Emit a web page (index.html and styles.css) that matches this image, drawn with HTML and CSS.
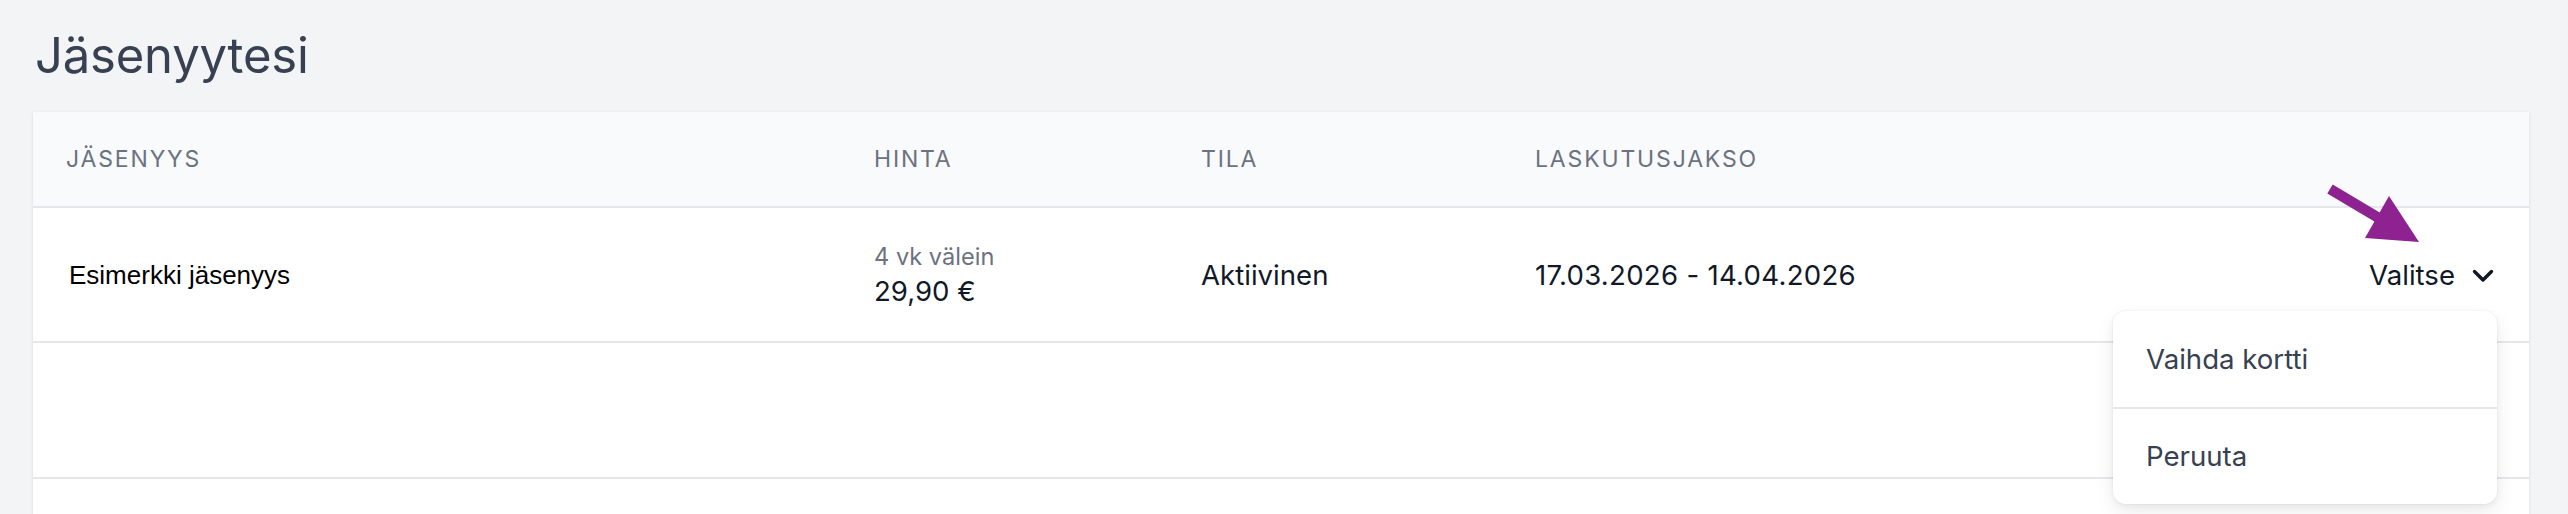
FILE: index.html
```html
<!DOCTYPE html>
<html lang="fi">
<head>
<meta charset="utf-8">
<title>Jäsenyytesi</title>
<link rel="stylesheet" href="styles.css">
</head>
<body>
<div class="page">
  <h1 class="title">Jäsenyytesi</h1>
  <div class="card">
    <div class="row head">
      <div class="th">Jäsenyys</div>
      <div class="th">Hinta</div>
      <div class="th">Tila</div>
      <div class="th">Laskutusjakso</div>
      <div class="th"></div>
    </div>
    <div class="row item">
      <div class="cell name">Esimerkki jäsenyys</div>
      <div class="cell price">
        <span class="interval">4 vk välein</span>
        <span class="amount">29,90 €</span>
      </div>
      <div class="cell">Aktiivinen</div>
      <div class="cell date">17.03.2026 - 14.04.2026</div>
      <div class="cell actions">
        <div class="dropdown">
          <svg class="annot-arrow" width="100" height="64" viewBox="0 0 100 64" aria-hidden="true">
            <line x1="8" y1="8" x2="58" y2="37.8" stroke="#8e2290" stroke-width="10.5"/>
            <polygon points="67,15 43,57 97,61" fill="#8e2290"/>
          </svg>
          <button class="select" type="button">
            <span>Valitse</span>
            <svg class="chev" width="22" height="14" viewBox="0 0 22 14" aria-hidden="true">
              <polyline points="2.5,2.5 11,11 19.5,2.5" fill="none" stroke="#111827" stroke-width="3.4" stroke-linecap="round" stroke-linejoin="round"/>
            </svg>
          </button>
          <div class="menu">
            <div class="menu-item">Vaihda kortti</div>
            <div class="menu-item">Peruuta</div>
          </div>
        </div>
      </div>
    </div>
    <div class="row item empty"></div>
    <div class="row item filler"></div>
  </div>
</div>
</body>
</html>
```

FILE: styles.css
```css
html, body {
  margin: 0;
  padding: 0;
}

body {
  background: #f3f4f6;
  font-family: Inter, "Noto Sans", "Liberation Sans", sans-serif;
  color: #111827;
  overflow: hidden;
}

.page {
  padding: 0 39px 0 33px;
}

.title {
  margin: 31px 0 0 2px;
  font-size: 49px;
  line-height: 49px;
  font-weight: 400;
  color: #374151;
  letter-spacing: -0.2px;
}

.card {
  margin-top: 32px;
  background: #ffffff;
  box-shadow: 0 1px 4px rgba(0, 0, 0, 0.08), 0 1px 2px rgba(0, 0, 0, 0.04);
  height: 420px;
}

.row {
  display: grid;
  grid-template-columns: 808px 327px 334px 1fr auto;
  align-items: center;
  padding: 0 35px 0 33px;
  border-bottom: 2px solid #e5e7eb;
}

.head {
  height: 94px;
  background: #f9fafb;
}

.th {
  font-size: 23px;
  font-weight: 400;
  letter-spacing: 0.08em;
  text-transform: uppercase;
  color: #6b7280;
}

.item {
  height: 133px;
  background: #ffffff;
}

.empty {
  height: 134px;
}

.filler {
  border-bottom: none;
  height: 60px;
}

.cell {
  font-size: 27.6px;
  line-height: 40px;
  color: #111827;
}

.date {
  letter-spacing: 0.01em;
}

.name {
  font-family: "Liberation Sans", Arial, sans-serif;
  font-size: 26px;
  color: #000000;
  padding-left: 3px;
}

.price {
  display: flex;
  flex-direction: column;
}

.interval {
  font-size: 23.6px;
  line-height: 33px;
  color: #6b7280;
}

.amount {
  font-size: 27.6px;
  line-height: 37px;
  color: #111827;
}

.actions {
  display: flex;
  justify-content: flex-end;
}

.dropdown {
  position: relative;
}

.select {
  display: flex;
  align-items: center;
  gap: 17px;
  margin: 0;
  padding: 0;
  border: none;
  background: transparent;
  font-family: inherit;
  font-size: 27.6px;
  line-height: 40px;
  color: #111827;
}

.chev {
  display: block;
  margin-top: 2px;
}

.annot-arrow {
  position: absolute;
  right: 72px;
  top: -74px;
}

.menu {
  position: absolute;
  right: -3px;
  top: calc(100% + 16px);
  width: 384px;
  background: #ffffff;
  border-radius: 13px;
  box-shadow: 0 8px 20px rgba(0, 0, 0, 0.08), 0 2px 6px rgba(0, 0, 0, 0.05), 0 0 0 1px rgba(0, 0, 0, 0.02);
  z-index: 2;
}

.menu-item {
  display: flex;
  align-items: center;
  height: 96px;
  padding: 0 33px;
  font-size: 27.6px;
  color: #374151;
  border-bottom: 2px solid #e5e7eb;
}

.menu-item:last-child {
  border-bottom: none;
  height: 95px;
}
```
